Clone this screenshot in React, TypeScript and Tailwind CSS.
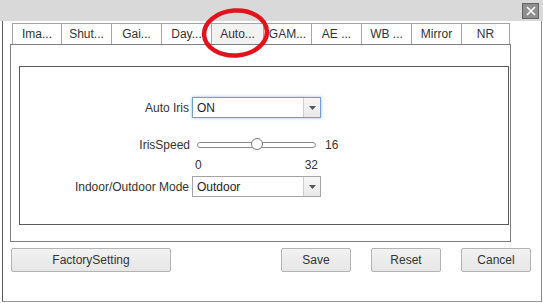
import React from "react";

const tabs: { label: string; w: string; selected?: boolean }[] = [
  { label: "Ima...", w: "w-[49px]" },
  { label: "Shut...", w: "w-[50px]" },
  { label: "Gai...", w: "w-[50px]" },
  { label: "Day...", w: "w-[50px]" },
  { label: "Auto...", w: "w-[52px]", selected: true },
  { label: "GAM...", w: "w-[48px]" },
  { label: "AE ...", w: "w-[50px]" },
  { label: "WB ...", w: "w-[50px]" },
  { label: "Mirror", w: "w-[50px]" },
  { label: "NR", w: "w-[49px]" },
];

function Select({ value, focused }: { value: string; focused?: boolean }) {
  return (
    <div
      className={
        focused
          ? "flex h-[21px] w-[129px] items-center border border-[#6f9fd6] bg-white shadow-[0_0_3px_#8fbbef]"
          : "flex h-[21px] w-[129px] items-center border border-[#a3a3a3] bg-white"
      }
    >
      <div className="flex-1 pl-[4px] leading-none text-[#222]">{value}</div>
      <div className="flex h-full w-[17px] items-center justify-center border-l border-[#cfcfcf] bg-gradient-to-b from-[#f6f6f6] to-[#e9e9e9]">
        <svg width="7" height="4" viewBox="0 0 7 4">
          <polygon points="0,0 7,0 3.5,4" fill="#555" />
        </svg>
      </div>
    </div>
  );
}

function Btn({ label, w }: { label: string; w: string }) {
  return (
    <div
      className={`${w} flex h-[24px] items-center justify-center rounded-[2px] border border-[#b3b3b3] bg-gradient-to-b from-[#f2f2f2] to-[#e6e6e6] text-[12px] text-[#333]`}
    >
      {label}
    </div>
  );
}

export default function App() {
  return (
    <div className="relative h-[303px] w-[543px] overflow-hidden bg-white font-['Liberation_Sans',Arial,sans-serif] text-[12px] text-[#333]">
      {/* title bar */}
      <div className="flex h-[21px] justify-end bg-[#d9d9d9] pr-[4px] pt-[3px]">
        <div className="flex h-[16px] w-[17px] items-center justify-center border border-[#626262] bg-[#8f8f8f]">
          <svg width="10" height="10" viewBox="0 0 10 10">
            <path d="M1 1 L9 9 M9 1 L1 9" stroke="#fff" strokeWidth="1.6" />
          </svg>
        </div>
      </div>

      {/* window body */}
      <div className="ml-[2px] h-[281px] w-[540px] border-b border-l border-r border-b-[#9a9a9a] border-l-[#5c5c5c] border-r-[#8a8a8a] pl-[7px] pt-[2px]">
        {/* tabs */}
        <div className="ml-[2px] flex h-[21px]">
          {tabs.map((t, i) => (
            <div
              key={t.label}
              className={`${t.w} flex items-center justify-center border-l border-t border-[#a5a5a5] ${
                i === tabs.length - 1 ? "border-r" : ""
              } ${t.selected ? "bg-[#f2f2f2]" : "bg-white"} text-[12px] text-[#333]`}
            >
              {t.label}
            </div>
          ))}
        </div>

        {/* panel */}
        <div className="h-[198px] w-[501px] border border-[#7f7f7f] pl-[8px] pt-[21px]">
          <div className="h-[159px] w-[490px] border border-[#5a5a5a] pt-[30px]">
            {/* Auto Iris */}
            <div className="flex h-[21px] items-center">
              <div className="w-[172px] pr-[3px] text-right">Auto Iris</div>
              <Select value="ON" focused />
            </div>

            {/* IrisSpeed */}
            <div className="mt-[19px] flex h-[16px] items-center">
              <div className="w-[172px] pr-[2px] text-right">IrisSpeed</div>
              <div className="relative ml-[5px] h-[6px] w-[119px] rounded-full border border-[#8a8a8a] bg-white">
                <div className="absolute left-[53px] top-[-5px] h-[12px] w-[12px] rounded-full border border-[#7a7a7a] bg-white" />
              </div>
              <div className="ml-[9px]">16</div>
            </div>

            {/* scale */}
            <div className="mt-[5px] flex h-[14px] items-center">
              <div className="ml-[175px] flex w-[123px] justify-between">
                <span>0</span>
                <span>32</span>
              </div>
            </div>

            {/* Indoor/Outdoor */}
            <div className="mt-[4px] flex h-[21px] items-center">
              <div className="w-[172px] pr-[3px] text-right">Indoor/Outdoor Mode</div>
              <Select value="Outdoor" />
            </div>
          </div>
        </div>

        {/* buttons */}
        <div className="ml-[1px] mt-[6px] flex">
          <Btn label="FactorySetting" w="w-[160px]" />
          <div className="ml-[110px] flex gap-[20px]">
            <Btn label="Save" w="w-[70px]" />
            <Btn label="Reset" w="w-[70px]" />
            <Btn label="Cancel" w="w-[70px]" />
          </div>
        </div>
      </div>

      {/* red annotation ellipse */}
      <svg
        className="pointer-events-none absolute left-0 top-0"
        width="543"
        height="303"
        viewBox="0 0 543 303"
      >
        <ellipse
          cx="235.5"
          cy="33"
          rx="31.5"
          ry="22.5"
          transform="rotate(-4 235.5 33)"
          fill="none"
          stroke="#e3121c"
          strokeWidth="4.5"
        />
      </svg>
    </div>
  );
}
